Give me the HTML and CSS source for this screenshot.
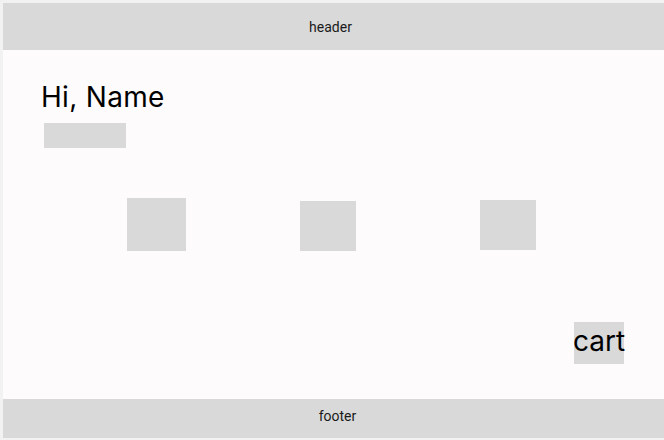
FILE: index.html
```html
<!DOCTYPE html>
<html>
<head>
<meta charset="utf-8">
<link rel="stylesheet" href="styles.css">
</head>
<body>
<div class="frame">
  <header class="header">header</header>
  <main class="main">
    <h1 class="greet">Hi, Name</h1>
    <div class="sub"></div>
    <div class="tiles">
      <div class="tile t1"></div>
      <div class="tile t2"></div>
      <div class="tile t3"></div>
    </div>
    <div class="cart-row">
      <div class="cart">cart</div>
    </div>
  </main>
  <footer class="footer">footer</footer>
</div>
</body>
</html>
```
FILE: styles.css
```css
html, body {
  margin: 0;
  padding: 0;
  width: 664px;
  height: 440px;
  overflow: hidden;
  background: #f2f2f2;
}
.frame {
  box-sizing: border-box;
  width: 664px;
  height: 440px;
  padding: 3px 0 2px 3px;
  display: flex;
  flex-direction: column;
  font-family: Inter, "Noto Sans", sans-serif;
}
.header {
  height: 47px;
  background: #d9d9d9;
  display: flex;
  align-items: center;
  justify-content: center;
  font-family: Roboto, sans-serif;
  font-size: 14px;
  color: #1a1a1a;
  padding-right: 6px;
}
.main {
  flex: 1;
  background: #fdfbfc;
  display: flex;
  flex-direction: column;
  padding: 0;
}
.greet {
  margin: 30px 0 0 38px;
  font-weight: 400;
  font-size: 28px;
  letter-spacing: 0.3px;
  line-height: 34px;
  color: #000;
}
.sub {
  margin: 9px 0 0 41px;
  width: 82px;
  height: 25px;
  background: #d9d9d9;
}
.tiles {
  display: flex;
  align-items: flex-start;
  margin-top: 50px;
  padding-left: 124px;
}
.tile {
  background: #d9d9d9;
}
.t1 { width: 59px; height: 53px; }
.t2 { width: 56px; height: 50px; margin-left: 114px; margin-top: 3px; }
.t3 { width: 56px; height: 50px; margin-left: 124px; margin-top: 2px; }
.cart-row {
  display: flex;
  justify-content: flex-end;
  padding-right: 40px;
  margin-top: 71px;
}
.cart {
  width: 50px;
  height: 42px;
  background: #d9d9d9;
  font-size: 28px;
  line-height: 38px;
  color: #000;
  display: flex;
  justify-content: center;
  white-space: nowrap;
}
.footer {
  margin-top: auto;
  box-sizing: border-box;
  height: 39px;
  background: #d9d9d9;
  display: flex;
  align-items: center;
  justify-content: center;
  font-family: Roboto, sans-serif;
  font-size: 14px;
  color: #1a1a1a;
  padding: 0 0 6px 8px;
}
```
